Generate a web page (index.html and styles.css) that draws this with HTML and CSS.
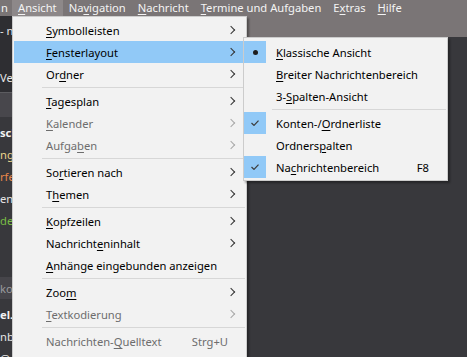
FILE: index.html
```html
<!DOCTYPE html>
<html lang="de">
<head>
  <meta charset="UTF-8">
  <title>Ansicht</title>
  <link rel="stylesheet" href="styles.css">
</head>
<body>
  <div class="menubar">
    <span class="cut">n</span>
    <span class="open"><u>A</u>nsicht</span>
    <span>Na<u>v</u>igation</span>
    <span><u>N</u>achricht</span>
    <span><u>T</u>ermine und Aufgaben</span>
    <span>E<u>x</u>tras</span>
    <span><u>H</u>ilfe</span>
  </div>

  <div class="tabrow">
    <div class="tab">- nachrichten</div>
  </div>

  <div class="pane">
    <div class="pane-top">Verfassen</div>
    <div class="pane-head"></div>
    <div class="rows">
      <div class="row bold">scheiben</div>
      <div class="row yellow">ngang</div>
      <div class="row orange">rfe</div>
      <div class="row">endet</div>
      <div class="row green">del</div>
    </div>
    <div class="pane-head grey">kontakt</div>
    <div class="rows">
      <div class="row bold">el.:</div>
      <div class="row">nbieter</div>
      <div class="row">@domain.de</div>
    </div>
  </div>

  <div class="menu main">
    <div class="item sub"><span><u>S</u>ymbolleisten</span></div>
    <div class="item sub active"><span><u>F</u>ensterlayout</span></div>
    <div class="item sub"><span>Or<u>d</u>ner</span></div>
    <div class="sep"></div>
    <div class="item sub"><span><u>T</u>agesplan</span></div>
    <div class="item sub disabled"><span><u>K</u>alender</span></div>
    <div class="item sub disabled"><span>Aufga<u>b</u>en</span></div>
    <div class="sep"></div>
    <div class="item sub"><span>So<u>r</u>tieren nach</span></div>
    <div class="item sub"><span>T<u>h</u>emen</span></div>
    <div class="sep"></div>
    <div class="item sub"><span><u>K</u>opfzeilen</span></div>
    <div class="item sub"><span>Nachricht<u>e</u>ninhalt</span></div>
    <div class="item"><span><u>A</u>nhänge eingebunden anzeigen</span></div>
    <div class="sep"></div>
    <div class="item sub"><span>Zoo<u>m</u></span></div>
    <div class="item sub disabled"><span><u>T</u>extkodierung</span></div>
    <div class="sep"></div>
    <div class="item disabled"><span>Nachrichten-<u>Q</u>uelltext</span><span class="key">Strg+U</span></div>
  </div>

  <div class="menu submenu">
    <div class="item"><span class="mark"><span class="dot"></span></span><span><u>K</u>lassische Ansicht</span></div>
    <div class="item"><span class="mark off"></span><span><u>B</u>reiter Nachrichtenbereich</span></div>
    <div class="item"><span class="mark off"></span><span>3-<u>S</u>palten-Ansicht</span></div>
    <div class="sep"></div>
    <div class="item">
      <span class="mark"><svg width="8" height="6" viewBox="0 0 8 6"><path d="M0.5 3 L3 5.4 L7.5 0.6" fill="none" stroke="#3c3c3c" stroke-width="1.2"/></svg></span>
      <span>Konten-/<u>O</u>rdnerliste</span>
    </div>
    <div class="item"><span class="mark off"></span><span>Ordners<u>p</u>alten</span></div>
    <div class="item">
      <span class="mark"><svg width="8" height="6" viewBox="0 0 8 6"><path d="M0.5 3 L3 5.4 L7.5 0.6" fill="none" stroke="#3c3c3c" stroke-width="1.2"/></svg></span>
      <span>Na<u>c</u>hrichtenbereich</span><span class="key">F8</span>
    </div>
  </div>
</body>
</html>
```

FILE: styles.css
```css
body {
  margin: 0;
  height: 357px;
  overflow: hidden;
  position: relative;
  background: #38383c;
  font-family: "Noto Sans", sans-serif;
  font-size: 11.2px;
}
u {
  text-underline-offset: 2px;
}

/* menu bar */
.menubar {
  display: flex;
  height: 16px;
  line-height: 16px;
  background: #7a7576;
  color: #f4f4f4;
  white-space: nowrap;
}
.menubar span {
  padding: 0 6px;
}
.menubar .cut {
  width: 12px;
  box-sizing: border-box;
  padding: 0 0 0 1px;
}
.menubar .open {
  background: #8d8889;
}

.tabrow {
  height: 21px;
  background: #7a7576;
}
.tab {
  width: 220px;
  height: 21px;
  box-sizing: border-box;
  padding-top: 7px;
  line-height: 16px;
  background: #2e2e32;
  color: #e8e8e8;
  white-space: nowrap;
}

/* folder pane behind the menu */
.pane {
  width: 230px;
  color: #e6e6e6;
  white-space: nowrap;
}
.pane-top {
  height: 56px;
  box-sizing: border-box;
  padding-top: 33px;
  line-height: 16px;
  background: #2e2e32;
  border-bottom: 1px solid #5c5c60;
}
.pane-head {
  height: 24px;
  background: #48474c;
}
.pane-head.grey {
  height: 22px;
  line-height: 24px;
  margin-top: 45px;
  color: #9a9a9e;
  background: #46454a;
}
.rows {
  padding-top: 5px;
}
.row {
  height: 22px;
  line-height: 22px;
}
.row.bold {
  font-weight: bold;
  color: #f2f2f2;
}
.row.yellow {
  color: #ecd58c;
}
.row.orange {
  color: #e8874a;
}
.row.green {
  color: #79bd45;
}

/* menus */
.menu {
  position: absolute;
  box-sizing: border-box;
  background: #f2f2f2;
  border: 1px solid #cccccc;
  box-shadow: 2px 2px 2px rgba(0, 0, 0, 0.35);
  color: #000;
  white-space: nowrap;
}
.main {
  left: 12px;
  top: 16px;
  width: 235px;
  padding: 2px 1px 8px;
}
.submenu {
  left: 243px;
  top: 37px;
  width: 205px;
  padding: 3px 1px 2px 0;
  z-index: 2;
}
.item {
  display: flex;
  align-items: center;
  height: 22px;
  padding: 0 10px 0 32px;
}
.item.active {
  background: #91c9f7;
}
.item.disabled {
  color: #6d6d6d;
}
.item.sub::after {
  content: "";
  width: 5px;
  height: 5px;
  margin-left: auto;
  margin-right: 1px;
  border-top: 1px solid #333;
  border-right: 1px solid #333;
  transform: rotate(45deg);
}
.item.sub.disabled::after {
  border-color: #a8a8a8;
}
.key {
  margin-left: auto;
  margin-right: 7px;
}
.sep {
  height: 1px;
  margin: 2px 0 2px 28px;
  background: #d7d7d7;
}

.submenu .item {
  padding: 0 10px 0 0;
}
.mark {
  display: flex;
  align-items: center;
  justify-content: center;
  width: 22px;
  height: 22px;
  margin-right: 10px;
  background: #91c9f7;
}
.mark.off {
  background: none;
}
.dot {
  width: 5px;
  height: 5px;
  border-radius: 50%;
  background: #1e1e1e;
}
```
